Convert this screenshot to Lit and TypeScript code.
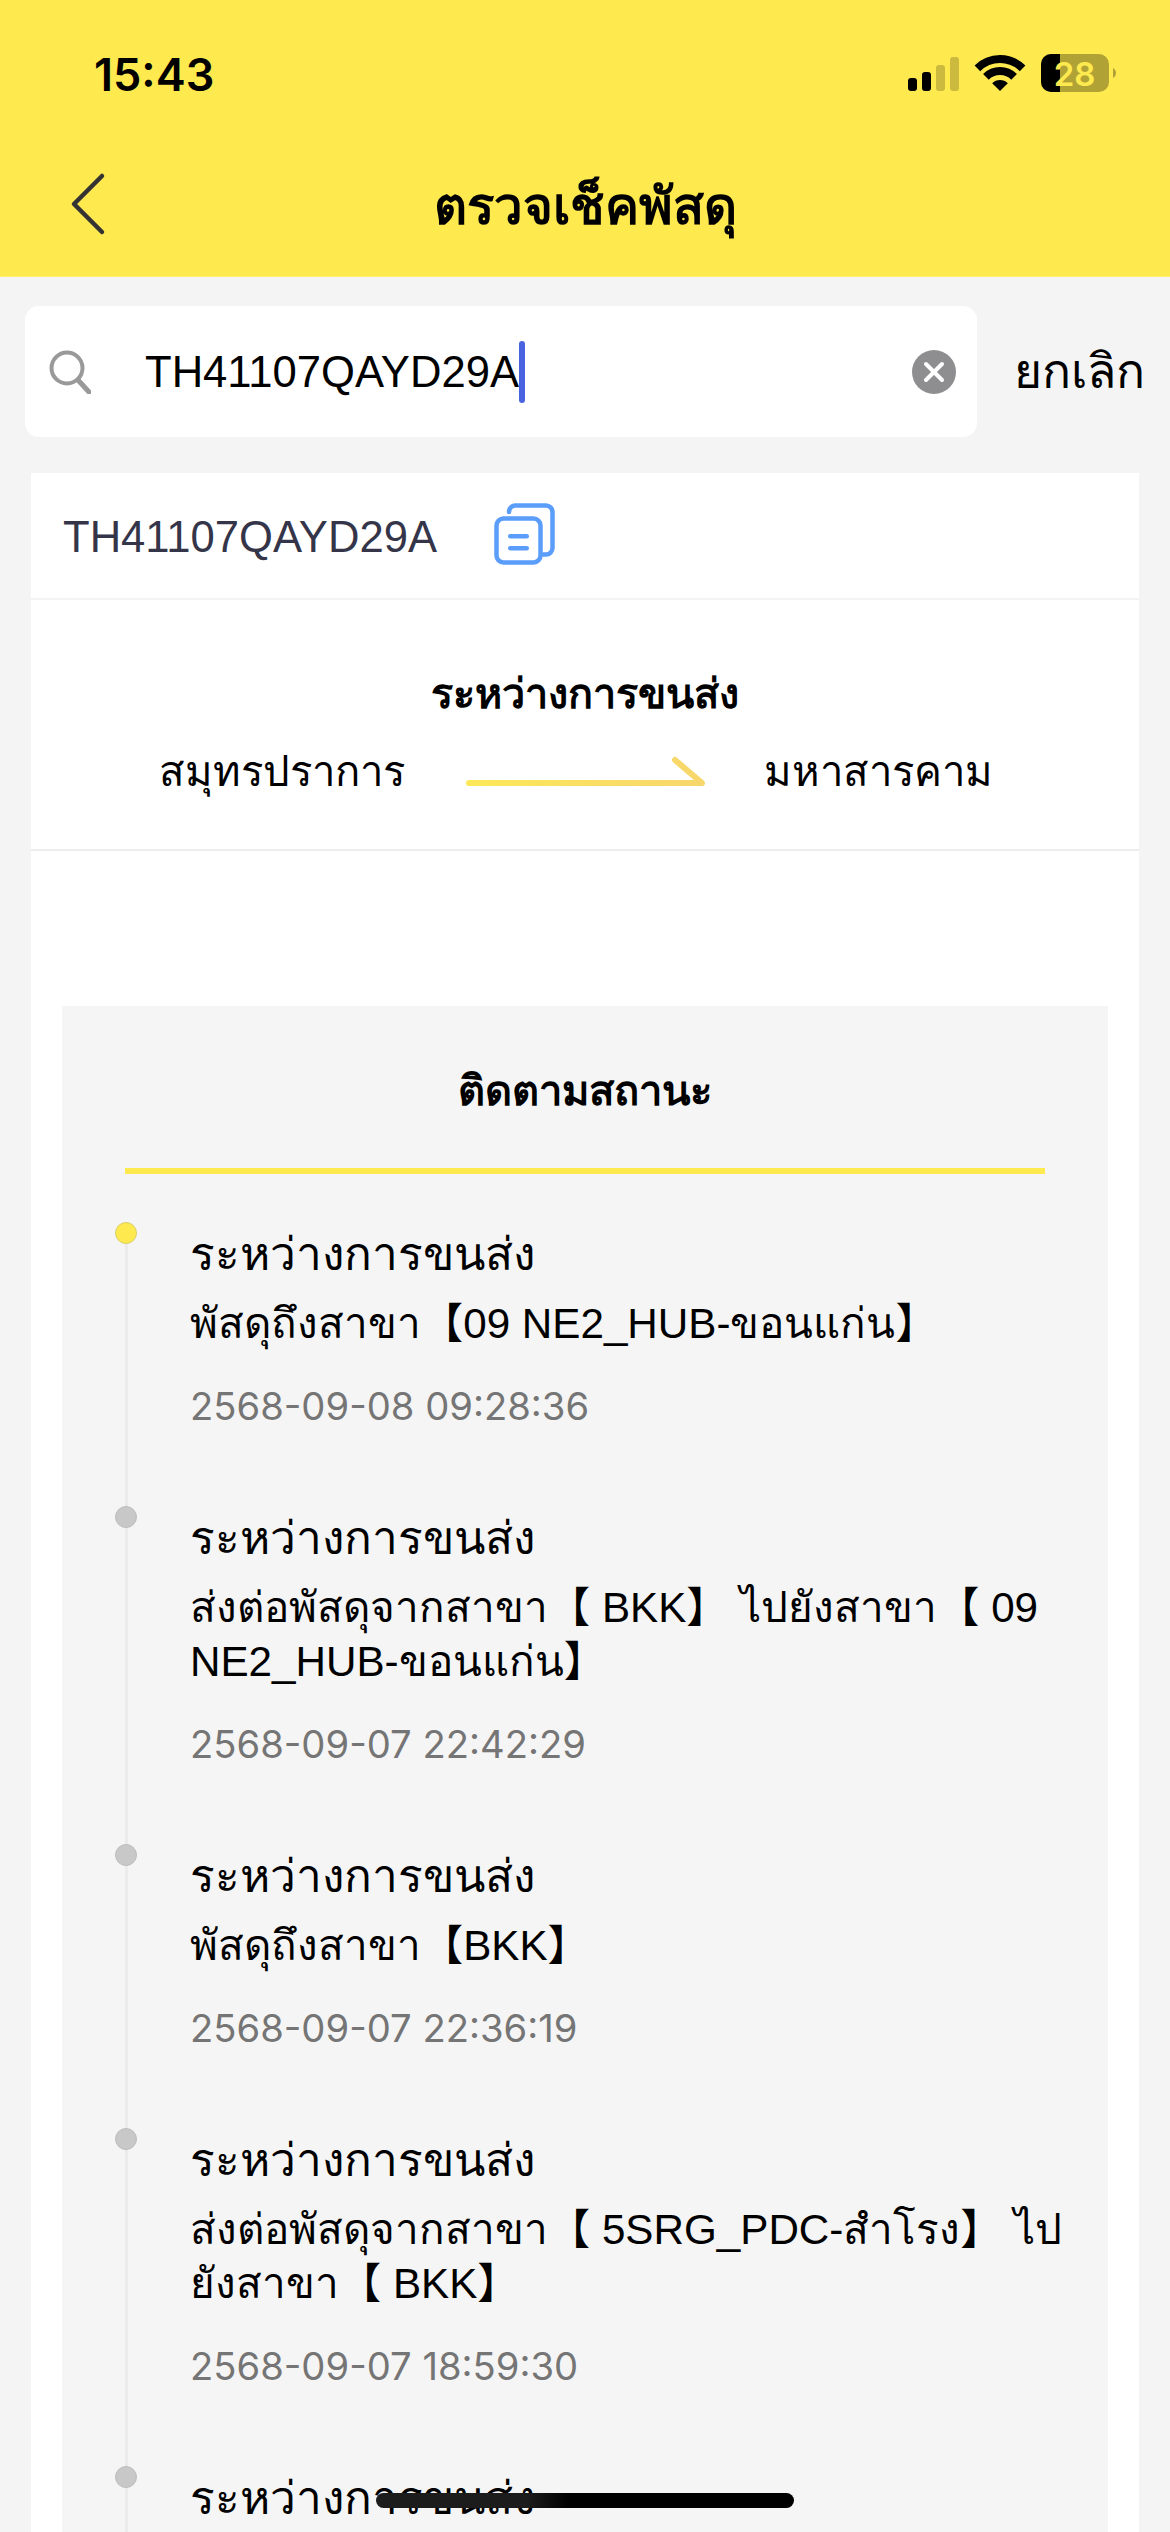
import { LitElement, html, css } from "lit";
import { customElement } from "lit/decorators.js";

const TITLE = "ระหว่างการขนส่ง";
const events: { desc: string[]; time: string }[] = [
  { desc: ["พัสดุถึงสาขา【09 NE2_HUB-ขอนแก่น】"], time: "2568-09-08 09:28:36" },
  { desc: ["ส่งต่อพัสดุจากสาขา【 BKK】 ไปยังสาขา【 09", "NE2_HUB-ขอนแก่น】"], time: "2568-09-07 22:42:29" },
  { desc: ["พัสดุถึงสาขา【BKK】"], time: "2568-09-07 22:36:19" },
  { desc: ["ส่งต่อพัสดุจากสาขา【 5SRG_PDC-สำโรง】 ไป", "ยังสาขา【 BKK】"], time: "2568-09-07 18:59:30" },
  { desc: [], time: "" },
];

@customElement("app-root")
export class AppRoot extends LitElement {
  static styles = css`
    :host {
      display: block;
      position: relative;
      width: 1170px;
      height: 2532px;
      overflow: hidden;
      background: #f4f4f4;
      font-family: "Liberation Sans", "Noto Sans", "DejaVu Sans", "Noto Sans CJK SC", sans-serif;
      color: #000;
    }
    .head {
      height: 277px;
      box-sizing: border-box;
      background: #fee94e;
      border-bottom: 1px solid #fef06e;
      display: flex;
      flex-direction: column;
    }
    .status {
      height: 148px;
      box-sizing: border-box;
      padding: 52px 54px 0 94px;
      display: flex;
      justify-content: space-between;
      align-items: flex-start;
    }
    .clock {
      font-family: Inter, "Liberation Sans", sans-serif;
      font-size: 45px;
      font-weight: 600;
      line-height: 46px;
    }
    .sys { display: block; margin-top: 2px; }
    .nav {
      position: relative;
      display: flex;
      justify-content: center;
      align-items: center;
      height: 120px;
    }
    .back { position: absolute; left: 68px; top: 23px; }
    .nav-title { font-size: 51px; font-weight: 700; line-height: 60px; margin-top: -3px; }
    .search-row {
      display: flex;
      align-items: center;
      padding: 29px 0 0 25px;
    }
    .search {
      width: 952px;
      height: 131px;
      box-sizing: border-box;
      background: #fff;
      border-radius: 14px;
      display: flex;
      align-items: center;
      padding: 0 21px 0 24px;
    }
    .q { margin-right: 54px; flex: none; }
    .typed { font-size: 43.6px; line-height: 62px; }
    .caret { width: 6px; height: 62px; border-radius: 3px; background: #4a63e0; }
    .clear { margin-left: auto; flex: none; }
    .cancel { margin-left: 37px; font-size: 48px; line-height: 60px; }
    .card {
      margin: 36px 31px 0;
      background: #fff;
    }
    .code-row {
      height: 127px;
      box-sizing: border-box;
      display: flex;
      align-items: center;
      padding-left: 32px;
      border-bottom: 2px solid #f3f3f3;
      gap: 57px;
    }
    .code { font-size: 43.6px; color: #35354a; line-height: 50px; margin-top: 2px; }
    .code-icon { margin-top: -4px; }
    .state {
      height: 251px;
      box-sizing: border-box;
      border-bottom: 2px solid #ececec;
      padding-top: 70px;
      text-align: center;
    }
    .state-title { font-size: 41.3px; font-weight: 700; line-height: 48px; }
    .route {
      display: flex;
      justify-content: center;
      align-items: center;
      margin-top: 24px;
      margin-left: -19px;
    }
    .route span { font-size: 41.8px; line-height: 60px; }
    .arrow { margin: 0 58px 0 61px; flex: none; }
    .panel {
      margin: 155px 31px 0;
      background: #f5f5f5;
      padding: 58px 63px 300px;
    }
    .panel-title {
      text-align: center;
      font-size: 41.7px;
      font-weight: 700;
      line-height: 54px;
      padding-bottom: 50px;
      border-bottom: 6px solid #fee94e;
    }
    .line {
      position: relative;
      margin-top: 48px;
      border-left: 3px solid #ebebeb;
    }
    .event {
      position: relative;
      padding-left: 62px;
      padding-bottom: 77px;
    }
    .dot {
      position: absolute;
      left: -13px;
      top: 0;
      width: 22px;
      height: 22px;
      box-sizing: border-box;
      border-radius: 50%;
      background: #c8c8c8;
      border: 1px solid #bdbdbd;
    }
    .dot.on { background: #fee94e; border-color: #d9cf6a; }
    .ev-title { font-size: 46px; line-height: 64px; }
    .ev-desc { font-size: 42.2px; line-height: 54px; white-space: nowrap; }
    .ev-title + .ev-desc { margin-top: 11px; }
    .ev-time {
      font-family: Inter, "Liberation Sans", sans-serif;
      font-size: 38.2px;
      line-height: 46px;
      color: #757575;
      margin-top: 32px;
    }
    .home {
      position: absolute;
      left: 376px;
      top: 2493px;
      width: 418px;
      height: 15px;
      border-radius: 8px;
      background: linear-gradient(90deg, #1c1c1c, #1c1c1c 36%, #000 46%);
    }
  `;

  render() {
    return html`
      <div class="head">
        <div class="status">
          <div class="clock">15:43</div>
          <svg class="sys" width="208" height="38" viewBox="0 0 208 38">
            <rect x="0" y="24" width="9" height="13" rx="3" fill="#000" />
            <rect x="14" y="18" width="9" height="19" rx="3" fill="#000" />
            <rect x="28" y="11" width="9" height="26" rx="3" fill="#000" fill-opacity=".2" />
            <rect x="42" y="3" width="9" height="34" rx="3" fill="#000" fill-opacity=".2" />
            <path d="M69.400 14.400 A32 32 0 0 1 114.600 14.400" fill="none" stroke="#000" stroke-width="8" />
            <path d="M77.900 22.900 A20 20 0 0 1 106.100 22.900" fill="none" stroke="#000" stroke-width="8" />
            <path d="M92 37 L84.200 29.200 A11 11 0 0 1 99.800 29.200 Z" fill="#000" />
            <rect x="133" y="0" width="68" height="38" rx="10" fill="#000" fill-opacity=".3" />
            <path d="M143 0 H152 V38 H143 A10 10 0 0 1 133 28 V10 A10 10 0 0 1 143 0 Z" fill="#000" />
            <path d="M205 14 C207 15 208 17 208 19 C208 21 207 23 205 24 Z" fill="#000" fill-opacity=".3" />
            <text x="166.500" y="31.500" text-anchor="middle" font-family="Inter, 'Liberation Sans', sans-serif" font-size="33" font-weight="600" fill="#fee94e">28</text>
          </svg>
        </div>
        <div class="nav">
          <svg class="back" width="40" height="66" viewBox="0 0 40 66">
            <path d="M34 5 L6 33 L34 61" fill="none" stroke="#333" stroke-width="4.500" stroke-linecap="round" stroke-linejoin="round" />
          </svg>
          <div class="nav-title">ตรวจเช็คพัสดุ</div>
        </div>
      </div>

      <div class="search-row">
        <div class="search">
          <svg class="q" width="42" height="44" viewBox="0 0 42 44">
            <circle cx="18" cy="18" r="15.500" fill="none" stroke="#999" stroke-width="4" />
            <path d="M29 30 L40 42" stroke="#999" stroke-width="5" stroke-linecap="round" />
          </svg>
          <span class="typed">TH41107QAYD29A</span><span class="caret"></span>
          <svg class="clear" width="44" height="44" viewBox="0 0 44 44">
            <circle cx="22" cy="22" r="22" fill="#8e8e90" />
            <path d="M14 14 L30 30 M30 14 L14 30" stroke="#fff" stroke-width="4" stroke-linecap="round" />
          </svg>
        </div>
        <div class="cancel">ยกเลิก</div>
      </div>

      <div class="card">
        <div class="code-row">
          <div class="code">TH41107QAYD29A</div>
          <svg class="code-icon" width="62" height="62" viewBox="0 0 62 62">
            <path d="M15 9 A6.500 6.500 0 0 1 21 2.500 H52 A6.500 6.500 0 0 1 58.500 9 V45 A6.500 6.500 0 0 1 52 51.500 H48" fill="none" stroke="#5b9dfb" stroke-width="4.500" stroke-linecap="round" />
            <rect x="2.500" y="15.500" width="44" height="44" rx="7" fill="#fff" stroke="#5b9dfb" stroke-width="4.500" />
            <rect x="14" y="31" width="21" height="4.500" rx="2.200" fill="#5b9dfb" />
            <rect x="14" y="43" width="21" height="4.500" rx="2.200" fill="#5b9dfb" />
          </svg>
        </div>
        <div class="state">
          <div class="state-title">${TITLE}</div>
          <div class="route">
            <span>สมุทรปราการ</span>
            <svg class="arrow" width="240" height="34" viewBox="0 0 240 34">
              <defs>
                <linearGradient id="ag" gradientUnits="userSpaceOnUse" x1="0" x2="240" y1="0" y2="0">
                  <stop offset="0" stop-color="#fde858" />
                  <stop offset="1" stop-color="#f7d66c" />
                </linearGradient>
              </defs>
              <path d="M3 28 H236 L209 5" fill="none" stroke="url(#ag)" stroke-width="6" stroke-linecap="round" stroke-linejoin="round" />
            </svg>
            <span>มหาสารคาม</span>
          </div>
        </div>
        <div class="panel">
          <div class="panel-title">ติดตามสถานะ</div>
          <div class="line">
            ${events.map(
              (e, i) => html`
                <div class="event">
                  <span class="dot ${i === 0 ? "on" : ""}"></span>
                  <div class="ev-title">${TITLE}</div>
                  ${e.desc.map((d) => html`<div class="ev-desc">${d}</div>`)}
                  ${e.time ? html`<div class="ev-time">${e.time}</div>` : ""}
                </div>
              `
            )}
          </div>
        </div>
      </div>
      <div class="home"></div>
    `;
  }
}
